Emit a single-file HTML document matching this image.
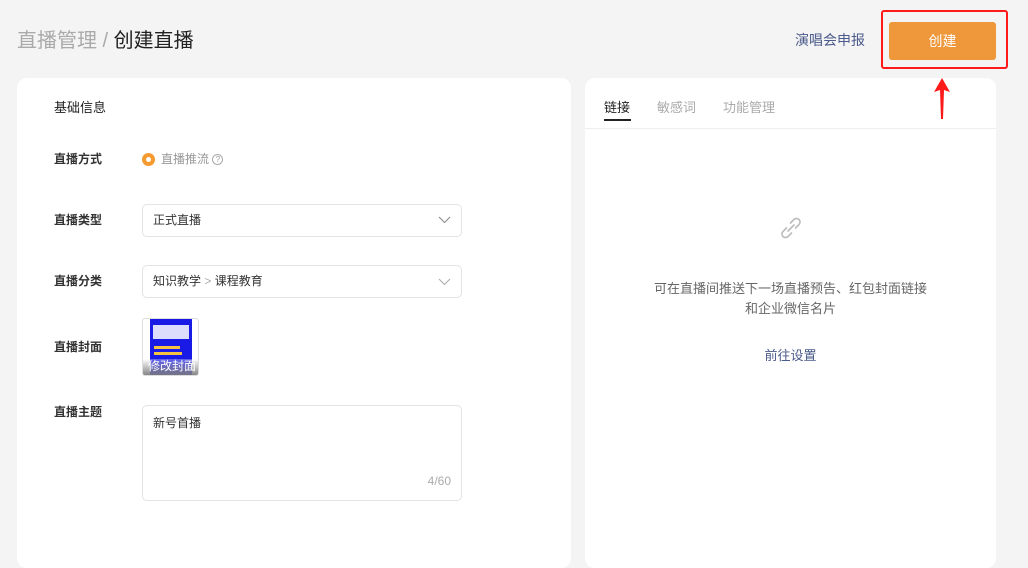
<!DOCTYPE html><html><head><meta charset="utf-8"><style>
*{margin:0;padding:0;box-sizing:border-box}
body{width:1028px;height:558px;background:#f4f4f4;font-family:"Liberation Sans","Noto Sans CJK SC",sans-serif;position:relative;overflow:hidden;color:#333}
.a{position:absolute}
.lbl{position:absolute;left:54px;font-size:12px;color:#333;font-weight:bold}
.box{position:absolute;left:142px;width:320px;border:1px solid #e3e3e3;border-radius:5px;background:#fff;font-size:12px}
</style></head><body>
<div class="a" style="left:17px;top:24px;font-size:20px;color:#aaa">直播管理 / <span style="color:#222">创建直播</span></div>
<div class="a" style="left:795px;top:30px;font-size:14px;color:#4a5a8a">演唱会申报</div>
<div class="a" style="left:881px;top:10px;width:127px;height:59px;border:2px solid #ff1a1a;border-radius:3px"></div>
<div class="a" style="left:889px;top:22px;width:107px;height:38px;background:#ee973b;border-radius:3px;color:#fff;font-size:14px;text-align:center;line-height:38px">创建</div>
<div class="a" style="left:17px;top:78px;width:554px;height:490px;background:#fff;border-radius:10px"></div>
<div class="a" style="left:54px;top:97px;font-size:13px;color:#222">基础信息</div>
<div class="lbl" style="top:150px">直播方式</div>
<div class="a" style="left:142px;top:153px;width:13px;height:13px;border-radius:50%;background:#f59a2f"><div style="margin:4px;width:5px;height:5px;border-radius:50%;background:#fff"></div></div>
<div class="a" style="left:161px;top:150px;font-size:12px;color:#999">直播推流 <span style="display:inline-block;width:11px;height:11px;border:1px solid #aaa;border-radius:50%;font-size:8px;text-align:center;line-height:9px;vertical-align:1px">?</span></div>
<div class="lbl" style="top:211px">直播类型</div>
<div class="box" style="top:204px;height:33px;line-height:31px;padding-left:10px">正式直播<svg class="a" style="right:10px;top:11px" width="13" height="8"><path d="M1 1l5.5 5.5L12 1" stroke="#888" fill="none"/></svg></div>
<div class="lbl" style="top:272px">直播分类</div>
<div class="box" style="top:265px;height:33px;line-height:31px;padding-left:10px">知识教学 <span style="color:#aaa">&gt;</span> 课程教育<svg class="a" style="right:10px;top:12px" width="13" height="8"><path d="M1 1l5.5 5.5L12 1" stroke="#aaa" fill="none"/></svg></div>
<div class="lbl" style="top:338px">直播封面</div>
<div class="a" style="left:142px;top:318px;width:57px;height:58px;border-radius:3px;background:#fff;overflow:hidden;border:1px solid #ddd">
<div class="a" style="left:7px;top:0;width:42px;height:58px;background:#1a1ae6"></div>
<div class="a" style="left:10px;top:6px;width:36px;height:14px;background:#fff;opacity:.85"></div>
<div class="a" style="left:11px;top:27px;width:26px;height:3px;background:#f5c242"></div>
<div class="a" style="left:11px;top:33px;width:28px;height:3px;background:#f5c242"></div>
<div class="a" style="left:0;top:40px;width:57px;height:18px;background:linear-gradient(rgba(255,255,255,.3),#777)"></div>
<div class="a" style="left:5px;top:38px;font-size:12px;color:#fff">修改封面</div></div>
<div class="lbl" style="top:403px">直播主题</div>
<div class="box" style="top:405px;height:96px;padding:8px 0 0 10px">新号首播<div class="a" style="right:10px;bottom:12px;color:#aaa">4/60</div></div>
<div class="a" style="left:585px;top:78px;width:411px;height:490px;background:#fff;border-radius:10px"></div>
<div class="a" style="left:585px;top:128px;width:411px;height:1px;background:#eee"></div>
<div class="a" style="left:604px;top:97px;font-size:13px;color:#222">链接</div>
<div class="a" style="left:604px;top:119px;width:27px;height:2px;background:#222"></div>
<div class="a" style="left:657px;top:97px;font-size:13px;color:#aaa">敏感词</div>
<div class="a" style="left:723px;top:97px;font-size:13px;color:#aaa">功能管理</div>
<svg class="a" style="left:777px;top:214px" width="28" height="28"><g stroke="#bbb" stroke-width="1.6" fill="none" stroke-linecap="round"><path d="M11 17l6-6"/><path d="M9.5 14l-3.5 3.5a3.5 3.5 0 005 5l3.5-3.5"/><path d="M18.5 14l3.5-3.5a3.5 3.5 0 00-5-5L13.5 9"/></g></svg>
<div class="a" style="left:585px;width:411px;top:279px;text-align:center;font-size:13px;color:#666;line-height:20px">可在直播间推送下一场直播预告、红包封面链接<br>和企业微信名片</div>
<div class="a" style="left:585px;width:411px;top:345px;text-align:center;font-size:13px;color:#4a5a8a">前往设置</div>
<svg class="a" style="left:933px;top:78px" width="18" height="42"><polygon points="9,0 17,14 11,12 10,41 8,41 7,12 1,14" fill="#ff1a1a"/></svg>
</body></html>
